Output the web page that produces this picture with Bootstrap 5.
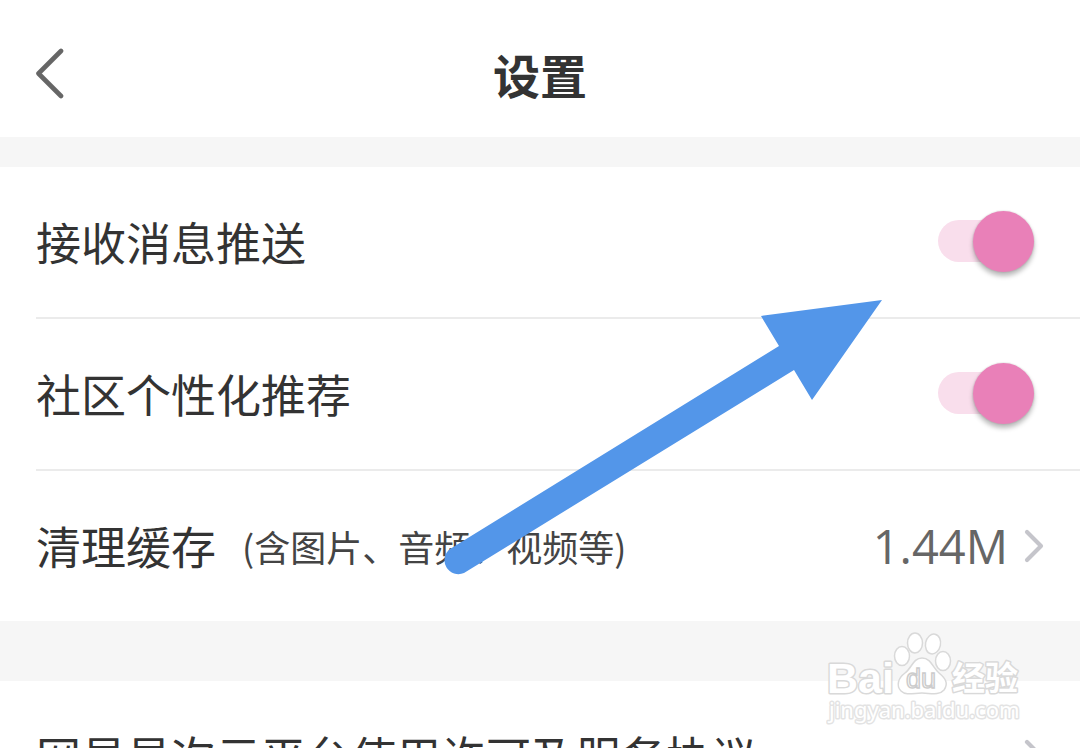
<!DOCTYPE html>
<html lang="zh-CN">
<head>
<meta charset="utf-8">
<meta name="viewport" content="width=device-width, initial-scale=1">
<title>设置</title>
<link href="https://cdn.jsdelivr.net/npm/bootstrap@5.3.0/dist/css/bootstrap.min.css" rel="stylesheet">
<style>
  body { font-family: "Noto Sans CJK SC", sans-serif; color: #333; background: #f6f6f6; }
  .topbar { height: 137px; padding: 10px 36px 0; }
  .topbar h1 { font-size: 47px; line-height: 64px; font-weight: 700; }
  .side { width: 64px; }
  .group-gap { margin-top: 30px; }
  .group-gap-lg { margin-top: 60px; }
  .setting { min-height: 150px; padding-right: 36px; font-size: 45px; line-height: 64px; }
  .setting + .setting { min-height: 152px; border-top: 2px solid #ebebeb; }
  .setting-group { padding-left: 36px; }
  .note { font-size: 36px; margin-left: 26px; color: #444; }
  .amount { font-family: "Open Sans", "Noto Sans", sans-serif; font-size: 47px; color: #666; }
  .chevron { margin-left: 16px; }
  .form-check-input.toggle { width: 96px; height: 42px; margin: 0 10px 2px 0; border: 0; border-radius: 21px; background: #f9deec; position: relative; }
  .toggle::before { content: ""; position: absolute; right: 0; top: -9px; width: 61px; height: 61px; border-radius: 50%; background: #e980b8; box-shadow: 0 0 1px 1px rgba(0,0,0,.06), 0 4px 5px rgba(0,0,0,.28); }
  .toggle:not(:checked)::before { right: auto; left: 0; background: #fff; }
  .pointer-arrow { left: 443px; top: 300px; pointer-events: none; }
  .brand-mark { right: 54px; top: 628px; pointer-events: none; }
</style>
</head>
<body>
<div class="position-relative vh-100 overflow-hidden">
  <header class="topbar bg-white d-flex align-items-center justify-content-between">
    <button type="button" class="btn side p-0 border-0 text-start lh-1" aria-label="返回">
      <svg width="28" height="52" viewBox="0 0 28 52" fill="none" stroke="#666" stroke-width="4.6" stroke-linecap="round" stroke-linejoin="round"><path d="M25 3 2.500 25.500 25 48"/></svg>
    </button>
    <h1 class="m-0">设置</h1>
    <span class="side"></span>
  </header>
  <main>
    <section class="setting-group group-gap bg-white">
      <div class="setting d-flex align-items-center justify-content-between">
        <label for="push">接收消息推送</label>
        <input class="form-check-input toggle" type="checkbox" role="switch" id="push" checked>
      </div>
      <div class="setting d-flex align-items-center justify-content-between">
        <label for="recommend">社区个性化推荐</label>
        <input class="form-check-input toggle" type="checkbox" role="switch" id="recommend" checked>
      </div>
      <a href="#" class="setting d-flex align-items-center text-reset text-decoration-none">
        <span>清理缓存</span>
        <span class="note">(含图片、音频、视频等)</span>
        <span class="amount ms-auto">1.44M</span>
        <svg class="chevron" width="20" height="34" viewBox="0 0 20 34" fill="none" stroke="#c5c5cb" stroke-width="4.200" stroke-linecap="round" stroke-linejoin="round"><path d="M3 3 17 17 3 31"/></svg>
      </a>
    </section>
    <section class="setting-group group-gap-lg bg-white">
      <a href="#" class="setting d-flex align-items-center text-reset text-decoration-none">
        <span>网易易次元平台使用许可及服务协议</span>
        <svg class="chevron ms-auto" width="20" height="34" viewBox="0 0 20 34" fill="none" stroke="#c5c5cb" stroke-width="4.200" stroke-linecap="round" stroke-linejoin="round"><path d="M3 3 17 17 3 31"/></svg>
      </a>
    </section>
  </main>
  <svg class="pointer-arrow position-absolute" width="440" height="276" viewBox="0 0 440 276" fill="#5396e9" aria-hidden="true">
    <path d="M439 0 318 16 336 46 7 249A14 14 0 0 0 21 273L351 70 369 100Z"/>
  </svg>
  <svg class="brand-mark position-absolute" width="200" height="100" viewBox="0 0 200 100" fill="#fff" stroke="#d9d9d9" stroke-width="1.500" role="img" aria-label="Baidu 经验">
    <g paint-order="stroke" stroke-width="3" stroke-linejoin="round">
      <text x="1" y="65" font-family="Liberation Sans, sans-serif" font-weight="700" font-size="43">Bai</text>
      <text x="126" y="62" font-family="Noto Sans CJK SC, sans-serif" font-weight="700" font-size="33">经验</text>
      <text x="3" y="90" font-family="Noto Sans, sans-serif" font-size="22" stroke="#e3e3e3">jingyan.baidu.com</text>
    </g>
    <ellipse cx="76" cy="28" rx="7.500" ry="9.500"/>
    <ellipse cx="89" cy="15" rx="7.500" ry="10"/>
    <ellipse cx="107" cy="16" rx="7.500" ry="10" transform="rotate(12 107 16)"/>
    <ellipse cx="117" cy="33" rx="7.500" ry="9.500"/>
    <path d="M96 30C87 30 86 40 79 45C72 50 70 58 75 63C80 68 88 65 96 65C104 65 113 68 118 62C123 55 119 50 113 45C107 40 105 30 96 30Z"/>
    <text x="80" y="60" font-family="Liberation Sans, sans-serif" font-size="27" stroke="#ccc">du</text>
  </svg>
</div>
<script src="https://cdn.jsdelivr.net/npm/bootstrap@5.3.0/dist/js/bootstrap.bundle.min.js"></script>
</body>
</html>
